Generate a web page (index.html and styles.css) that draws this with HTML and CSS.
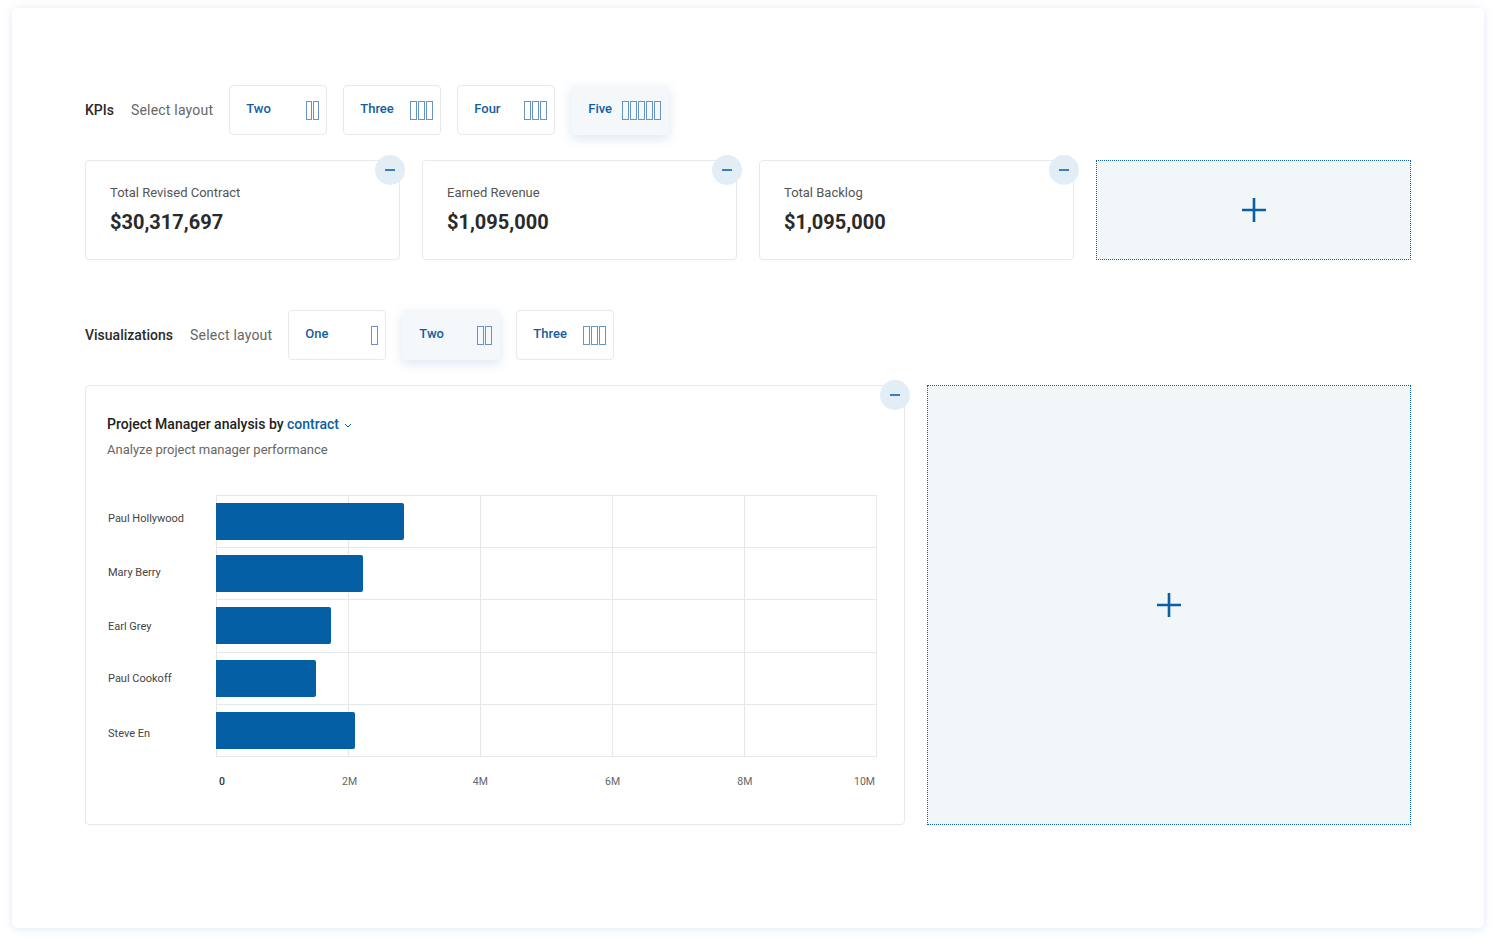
FILE: index.html
```html
<!DOCTYPE html>
<html lang="en">
<head>
<meta charset="utf-8">
<title>Dashboard layout</title>
<link rel="stylesheet" href="styles.css">
</head>
<body>
<div class="frame">
  <section class="section">
    <div class="toolbar">
      <span class="section-title">KPIs</span>
      <span class="select-label">Select layout</span>
      <div class="layout-options">
        <button class="layout-btn"><span class="btn-text">Two</span><span class="cols cols-narrow"><i></i><i></i></span></button>
        <button class="layout-btn"><span class="btn-text">Three</span><span class="cols"><i></i><i></i><i></i></span></button>
        <button class="layout-btn"><span class="btn-text">Four</span><span class="cols"><i></i><i></i><i></i></span></button>
        <button class="layout-btn selected"><span class="btn-text">Five</span><span class="cols"><i></i><i></i><i></i><i></i><i></i></span></button>
      </div>
    </div>
    <div class="kpi-grid">
      <div class="card kpi">
        <button class="remove" aria-label="Remove"><span></span></button>
        <div class="kpi-label">Total Revised Contract</div>
        <div class="kpi-value">$30,317,697</div>
      </div>
      <div class="card kpi">
        <button class="remove" aria-label="Remove"><span></span></button>
        <div class="kpi-label">Earned Revenue</div>
        <div class="kpi-value">$1,095,000</div>
      </div>
      <div class="card kpi">
        <button class="remove" aria-label="Remove"><span></span></button>
        <div class="kpi-label">Total Backlog</div>
        <div class="kpi-value">$1,095,000</div>
      </div>
      <div class="add-slot">
        <svg width="26" height="26" viewBox="0 0 26 26"><path d="M13 1v24M1 13h24" stroke="#0b5ea4" stroke-width="2.6" fill="none"/></svg>
      </div>
    </div>
  </section>

  <section class="section viz-section">
    <div class="toolbar">
      <span class="section-title">Visualizations</span>
      <span class="select-label">Select layout</span>
      <div class="layout-options">
        <button class="layout-btn"><span class="btn-text">One</span><span class="cols"><i></i></span></button>
        <button class="layout-btn selected"><span class="btn-text">Two</span><span class="cols"><i></i><i></i></span></button>
        <button class="layout-btn"><span class="btn-text">Three</span><span class="cols"><i></i><i></i><i></i></span></button>
      </div>
    </div>
    <div class="viz-grid">
      <div class="card chart-card">
        <button class="remove" aria-label="Remove"><span></span></button>
        <div class="chart-title">Project Manager analysis by <span class="link">contract</span>
          <svg class="chev" width="8" height="5" viewBox="0 0 8 5"><path d="M1 1l3 3 3-3" stroke="#0b5ea4" stroke-width="1" fill="none"/></svg>
        </div>
        <div class="chart-sub">Analyze project manager performance</div>
        <div class="chart">
          <div class="labels">
            <div class="l1">Paul Hollywood</div>
            <div class="l2">Mary Berry</div>
            <div class="l3">Earl Grey</div>
            <div class="l4">Paul Cookoff</div>
            <div class="l5">Steve En</div>
          </div>
          <div class="plot">
            <div class="row"><div class="bar" style="width:28.45%"></div></div>
            <div class="row"><div class="bar" style="width:22.2%"></div></div>
            <div class="row"><div class="bar" style="width:17.4%"></div></div>
            <div class="row"><div class="bar" style="width:15.2%"></div></div>
            <div class="row"><div class="bar" style="width:21.05%"></div></div>
          </div>
          <div class="axis">
            <span class="tick first">0</span>
            <span class="tick" style="left:20.2%">2M</span>
            <span class="tick" style="left:40%">4M</span>
            <span class="tick" style="left:60%">6M</span>
            <span class="tick" style="left:80%">8M</span>
            <span class="tick last">10M</span>
          </div>
        </div>
      </div>
      <div class="add-slot">
        <svg width="26" height="26" viewBox="0 0 26 26"><path d="M13 1v24M1 13h24" stroke="#0b5ea4" stroke-width="2.6" fill="none"/></svg>
      </div>
    </div>
  </section>
</div>
</body>
</html>
```
FILE: styles.css
```css
* { box-sizing: border-box; }
html, body { margin: 0; background: #ffffff; }
body {
  font-family: Roboto, "Liberation Sans", Arial, sans-serif;
  color: #333;
  padding: 8px 12px 16px;
}
.frame {
  width: 1472px;
  height: 920px;
  background: #fff;
  border-radius: 6px;
  box-shadow: 0 1px 10px rgba(60, 120, 190, 0.16);
  padding: 77px 73px 0;
}
.toolbar {
  display: flex;
  align-items: center;
  height: 50px;
}
.section-title {
  font-size: 14px;
  font-weight: 500;
  color: #2b2b2b;
  margin-right: 17px;
}
.select-label {
  font-size: 14px;
  color: #666;
  letter-spacing: 0.2px;
  margin-right: 16px;
}
.layout-options { display: flex; gap: 16px; }
.layout-btn {
  width: 98px;
  height: 50px;
  border: 1px solid #e7e9eb;
  border-radius: 4px;
  background: #fff;
  display: flex;
  align-items: center;
  justify-content: space-between;
  padding: 0 7px 0 16px;
  font-family: inherit;
  font-size: 13px;
  font-weight: 500;
  color: #135e9e;
}
.btn-text { margin-bottom: 3px; }
.layout-btn.selected {
  background: #f4f8fb;
  border-color: #f4f8fb;
  box-shadow: 0 4px 12px rgba(40, 110, 180, 0.16);
}
.cols { display: flex; gap: 1px; }
.cols i {
  display: block;
  width: 7px;
  height: 19px;
  border: 1px solid #6795c3;
}
.cols-narrow i { width: 6px; }

.kpi-grid {
  margin-top: 25px;
  display: grid;
  grid-template-columns: repeat(4, 1fr);
  gap: 22px;
}
.card {
  position: relative;
  background: #fff;
  border: 1px solid #e8e9eb;
  border-radius: 4px;
}
.kpi { height: 100px; padding: 24px 24px 0; }
.kpi-label { font-size: 13px; color: #555; line-height: 16px; }
.kpi-value { font-size: 20px; font-weight: 700; color: #2a2a2a; margin-top: 9px; line-height: 24px; }
.remove {
  position: absolute;
  top: -6px;
  right: -6px;
  width: 30px;
  height: 30px;
  border-radius: 50%;
  border: none;
  background: #e2edf6;
  display: flex;
  align-items: center;
  justify-content: center;
  padding: 0;
}
.remove span { display: block; width: 10px; height: 2px; background: #3b7ebf; }
.add-slot {
  border: 1px dotted #0f5fa5;
  background: #f1f6f9;
  display: flex;
  align-items: center;
  justify-content: center;
  min-height: 100px;
}

.viz-section { margin-top: 50px; }
.viz-grid {
  margin-top: 25px;
  display: grid;
  grid-template-columns: 820px 1fr;
  gap: 22px;
  height: 440px;
}
.chart-card { padding: 29px 27px 0 21px; }
.chart-title { font-size: 14px; font-weight: 500; color: #222; line-height: 18px; display: flex; align-items: center; white-space: pre; }
.chart-title .link { color: #0b5ea4; }
.chev { margin-left: 5px; margin-top: 2px; }
.chart-sub { font-size: 13px; color: #666; margin-top: 9px; line-height: 16px; }
.chart {
  margin-top: 37px;
  display: grid;
  grid-template-columns: 109px 661px;
  grid-template-rows: 262px auto;
}
.labels { display: flex; flex-direction: column; padding-left: 1px; }
.labels div {
  height: 52.4px;
  display: flex;
  align-items: center;
  font-size: 11px;
  color: #444;
}
.labels .l1 { padding-bottom: 5px; }
.labels .l2 { padding-bottom: 3px; }
.labels .l3 { padding-top: 1px; }
.labels .l4 { padding-top: 1px; }
.labels .l5 { padding-top: 5px; }
.plot {
  border-top: 1px solid #e6e7e8;
  border-right: 1px solid #e6e7e8;
  background-image: linear-gradient(to right, #e6e7e8 1px, transparent 1px);
  background-size: 20% 100%;
  display: flex;
  flex-direction: column;
}
.row {
  height: 52.2px;
  border-bottom: 1px solid #e6e7e8;
  display: flex;
  align-items: center;
}
.bar {
  height: 37px;
  background: #045fa4;
  border-radius: 0 2px 2px 0;
}
.axis {
  grid-column: 2;
  position: relative;
  height: 34px;
  font-size: 10.5px;
  color: #666;
}
.tick {
  position: absolute;
  top: 18px;
  transform: translateX(-50%);
}
.tick.first { left: 3px; transform: none; color: #333; font-weight: 500; }
.tick.last { right: 2px; transform: none; }
```
